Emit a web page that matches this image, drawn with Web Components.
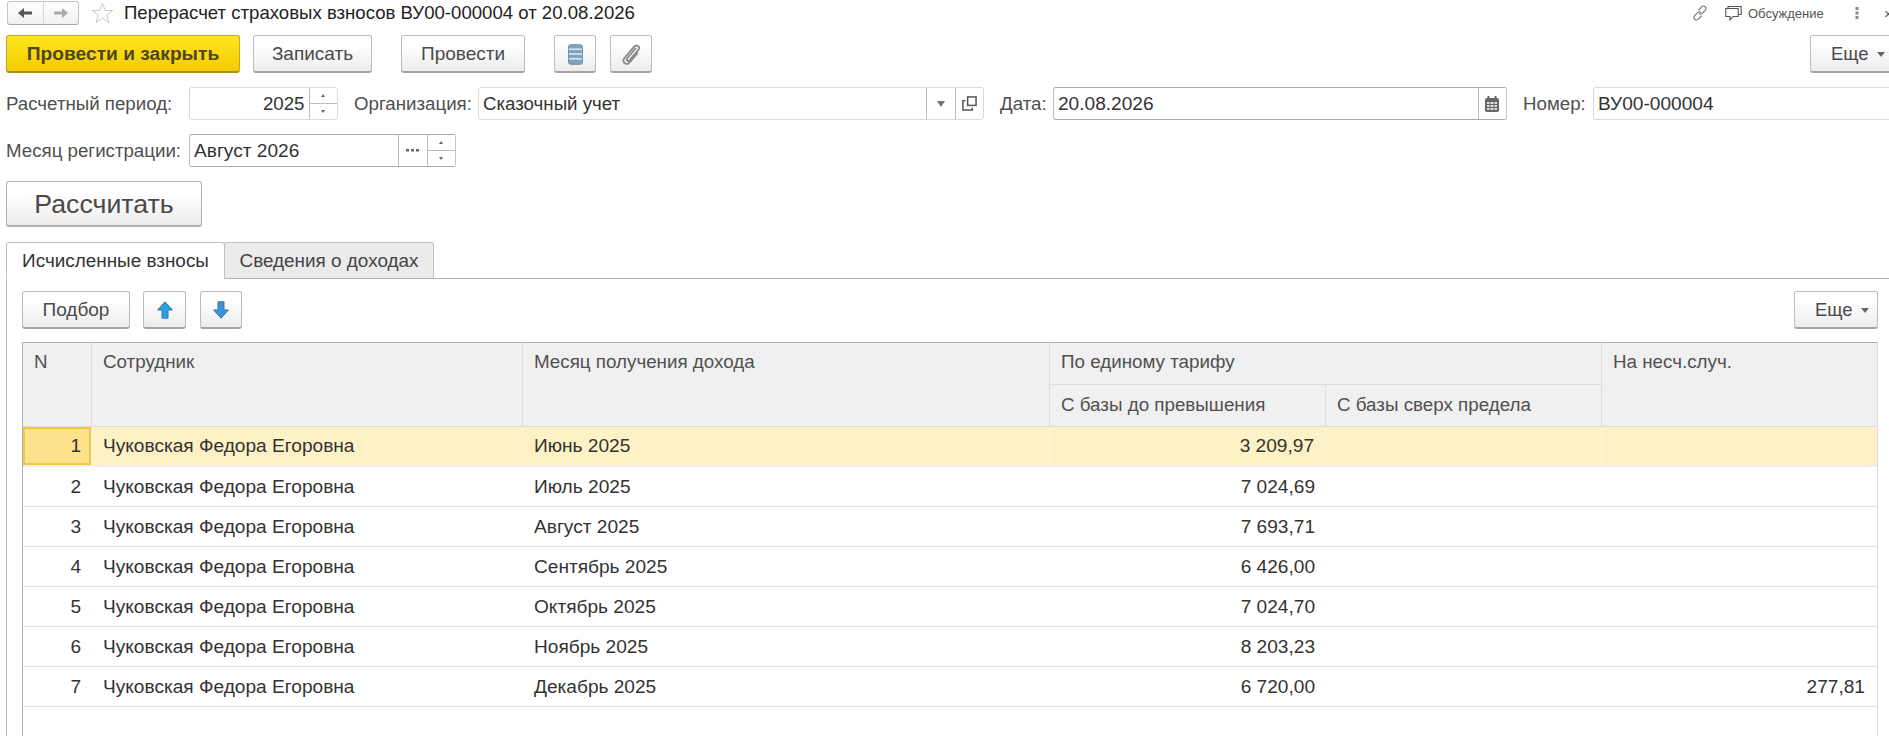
<!DOCTYPE html>
<html lang="ru"><head><meta charset="utf-8"><title>Перерасчет</title>
<style>
html,body{margin:0;height:736px;overflow:hidden;background:#fff}
body{font-family:"Liberation Sans",Arial,sans-serif;color:#333;width:1889px}
</style></head><body>
<x-page>
  <x-topbar title="Перерасчет страховых взносов ВУ00-000004 от 20.08.2026"></x-topbar>
  <x-row style="margin-top:10px;height:38px">
    <x-btn primary style="width:234px">Провести и закрыть</x-btn>
    <x-btn style="width:119px;margin-left:13px">Записать</x-btn>
    <x-btn style="width:124px;margin-left:29px">Провести</x-btn>
    <x-btn style="width:42px;margin-left:29px" aria-label="Журнал"><x-icon name="list"></x-icon></x-btn>
    <x-btn style="width:42px;margin-left:14px" aria-label="Файлы"><x-icon name="clip"></x-icon></x-btn>
    <x-btn more style="width:84px;margin-left:auto;margin-right:-5px">Еще</x-btn>
  </x-row>
  <x-row style="margin-top:14px;height:33px">
    <x-label style="width:183px">Расчетный период:</x-label>
    <x-field value="2025" right btns="spin" style="width:149px"></x-field>
    <x-label style="width:124px;margin-left:16px">Организация:</x-label>
    <x-field value="Сказочный учет" btns="drop open" style="width:506px"></x-field>
    <x-label style="width:53px;margin-left:16px">Дата:</x-label>
    <x-field value="20.08.2026" active btns="cal" style="width:454px;font-size:19.100px"></x-field>
    <x-label style="width:70px;margin-left:16px">Номер:</x-label>
    <x-field value="ВУ00-000004" style="width:400px;flex:none;font-size:19.100px"></x-field>
  </x-row>
  <x-row style="margin-top:14px;height:33px">
    <x-label style="width:183px">Месяц регистрации:</x-label>
    <x-field value="Август 2026" active btns="dots spin" style="width:267px;font-size:19.100px"></x-field>
  </x-row>
  <x-row style="margin-top:14px;height:46px">
    <x-btn large style="width:196px">Рассчитать</x-btn>
  </x-row>
  <x-tabs style="margin-top:15px" first="Исчисленные взносы" second="Сведения о доходах">
    <x-row style="height:38px;margin-bottom:13px">
      <x-btn style="width:108px">Подбор</x-btn>
      <x-btn style="width:43px;margin-left:13px" aria-label="Вверх"><x-icon name="up"></x-icon></x-btn>
      <x-btn style="width:42px;margin-left:14px" aria-label="Вниз"><x-icon name="down"></x-icon></x-btn>
      <x-btn more style="width:84px;margin-left:auto">Еще</x-btn>
    </x-row>
    <x-table>
      <x-tr n="1" month="Июнь 2025" a="3 209,97" selected></x-tr>
      <x-tr n="2" month="Июль 2025" a="7 024,69"></x-tr>
      <x-tr n="3" month="Август 2025" a="7 693,71"></x-tr>
      <x-tr n="4" month="Сентябрь 2025" a="6 426,00"></x-tr>
      <x-tr n="5" month="Октябрь 2025" a="7 024,70"></x-tr>
      <x-tr n="6" month="Ноябрь 2025" a="8 203,23"></x-tr>
      <x-tr n="7" month="Декабрь 2025" a="6 720,00" c="277,81"></x-tr>
    </x-table>
  </x-tabs>
</x-page>
<script>
const ICONS={
 list:'<svg width="15" height="21" viewBox="0 0 16 22"><rect x=".5" y=".5" width="15" height="21" rx="2.5" fill="#7fa4c2" stroke="#6b8fae"/><path d="M1 5.500h14M1 10.500h14M1 15.500h14" stroke="#dfeaf3" stroke-width="1.600"/></svg>',
 clip:'<svg width="22" height="24" viewBox="0 0 22 24"><path d="M15.500 6.500 7 16.500c-1.300 1.600 1 3.400 2.400 1.800l9-10.500c2.400-2.900-1.700-6-4.200-3.200L4.400 16c-3.300 3.900 2 8 5.200 4.300l7.600-8.900" fill="none" stroke="#8a8a8a" stroke-width="1.900" stroke-linecap="round"/></svg>',
 up:'<svg width="16" height="18" viewBox="0 0 16 18"><path d="M8 .8 15.400 9H11v8.200H5V9H.6z" fill="#2d9fe3" stroke="#2a7fb8"/></svg>',
 down:'<svg width="16" height="18" viewBox="0 0 16 18"><path d="M8 17.200.6 9H5V.8h6V9h4.400z" fill="#3f94d6" stroke="#2f74ad"/></svg>'
};
function def(name,css,html){
  customElements.define(name,class extends HTMLElement{
    connectedCallback(){
      if(this.shadowRoot)return;
      const r=this.attachShadow({mode:'open'});
      r.innerHTML='<style>'+css+'</style>'+(typeof html==='function'?html(this):html);
    }
  });
}
def('x-page',':host{display:flex;flex-direction:column;height:736px;padding-left:6px;box-sizing:border-box;width:1889px;overflow:hidden}','<slot></slot>');
def('x-row',':host{display:flex;align-items:stretch;flex:none}','<slot></slot>');
def('x-icon',':host{display:flex;align-items:center;justify-content:center}',h=>ICONS[h.getAttribute('name')]);
def('x-label',':host{display:flex;align-items:center;flex:none;font-size:18.700px;padding-top:1px;box-sizing:border-box;color:#4f4f4f;white-space:nowrap}','<slot></slot>');
def('x-topbar',`:host{display:flex;align-items:center;height:24px;margin-top:1px;flex:none}
 .nav{display:flex;width:72px;height:24px;box-sizing:border-box;margin-left:1px;border:1px solid #c4c4c4;border-bottom-color:#a8a8a8;border-radius:3px;background:linear-gradient(#fff,#f1f1f1)}
 .nav i{flex:1;display:flex;align-items:center;justify-content:center}.nav i+i{border-left:1px solid #d4d4d4}
 .star{margin-left:12px;display:block}
 h1{font:400 18.600px "Liberation Sans",Arial,sans-serif;color:#222;margin:0 0 0 10px;white-space:nowrap}
 .r{margin-left:auto;display:flex;align-items:center;color:#555;font-size:13px}
 .r svg{display:block;flex:none}.x{margin-left:25px;width:5px;font-size:15px;line-height:1;color:#555;white-space:nowrap}`,
 h=>`<div class="nav"><i><svg width="14" height="10" viewBox="0 0 14 10"><path d="M6 0 0 5l6 5V6.500h8v-3H6z" fill="#555"/></svg></i><i><svg width="14" height="10" viewBox="0 0 14 10"><path d="M8 0l6 5-6 5V6.500H0v-3h8z" fill="#aaa"/></svg></i></div>
 <svg class="star" width="23" height="23" viewBox="0 0 23 23"><path d="M11.500 1.500l2.800 7h7.400l-6 4.600 2.300 7.600-6.500-4.500-6.500 4.500 2.300-7.600-6-4.600h7.400z" fill="#fff" stroke="#c8c8c8"/></svg>
 <h1>${h.getAttribute('title')}</h1>
 <div class="r"><svg width="16" height="16" viewBox="0 0 16 16" fill="none" stroke="#777" stroke-width="1.100"><path d="M6.500 5 9.500 2a2.400 2.400 0 0 1 3.800 3.300l-3 3a2.400 2.400 0 0 1-3.300 0M9.500 11 6.500 14a2.400 2.400 0 0 1-3.800-3.300l3-3a2.400 2.400 0 0 1 3.300 0"/></svg>
 <svg style="margin-left:17px" width="17" height="17" viewBox="0 0 17 17" fill="none" stroke="#555" stroke-width="1.100"><path d="M3 3.500v-2h13.200v8h-3"/><path d="M.8 3.500h12.400v8H8l-3 3.500v-3.500H.8z"/></svg>
 <span style="margin-left:6px;width:76px;white-space:nowrap">Обсуждение</span>
 <svg style="margin-left:31px" width="4" height="14" viewBox="0 0 4 14" fill="#888"><rect x="0.500" y="1" width="3" height="3"/><rect x="0.500" y="5.500" width="3" height="3"/><rect x="0.500" y="10" width="3" height="3"/></svg>
 <span class="x">×</span></div>`);
def('x-btn',`:host{display:flex;flex:none;align-items:center;justify-content:center;box-sizing:border-box;padding-top:1px;font-size:19px;color:#4a4a4a;white-space:nowrap;border:1px solid #bdbdbd;border-bottom:2px solid #a4a4a4;border-radius:3px;background:linear-gradient(#fff 25%,#ececec)}
 :host([primary]){font-weight:700;color:#4d4720;font-size:19.200px;background:linear-gradient(#ffe61f,#f5cb00);border-color:#c2a72a;border-bottom-color:#a8901d}
 :host([large]){font-size:26.700px;border-color:#b0b0b0}
 :host([more]){justify-content:flex-start;padding-left:20px;font-size:18.400px}
 .a{width:0;height:0;border:4px solid transparent;border-top:5px solid #666;border-bottom:0;margin-left:9px}`,
 h=>'<slot></slot>'+(h.hasAttribute('more')?'<i class="a"></i>':''));
def('x-field',`:host{display:flex;flex:none;box-sizing:border-box;border:1px solid #d9d9d9;border-radius:3px;background:#fff;font-size:18.700px;color:#333;overflow:hidden}
 :host([active]){border-color:#aaa;border-left-color:#bdbdbd;border-right-color:#c4c4c4}
 .v{flex:1;min-width:0;display:flex;align-items:center;padding:1px 4px 0;white-space:nowrap}
 :host([right]) .v{justify-content:flex-end}
 .b{flex:none;width:27.500px;border-left:1px solid #bcbcbc;display:flex;flex-direction:column;align-items:center;justify-content:center;background:#fff}
 .s{flex:1;align-self:stretch;display:flex;align-items:center;justify-content:center}.s+.s{border-top:1px solid #bcbcbc}
 .u,.d{width:0;height:0;border:2.500px solid transparent}
 .u{border-top:0;border-bottom:3px solid #666}.d{border-bottom:0;border-top:3px solid #666}
 .dr{width:0;height:0;border:4.500px solid transparent;border-bottom:0;border-top:6px solid #777}`,
 h=>{const m={spin:'<div class="b"><div class="s"><i class="u"></i></div><div class="s"><i class="d"></i></div></div>',
  dots:'<div class="b"><svg width="13" height="3" viewBox="0 0 13 3" fill="#666"><rect width="3" height="2.500"/><rect x="5" width="3" height="2.500"/><rect x="10" width="3" height="2.500"/></svg></div>',
  drop:'<div class="b"><i class="dr"></i></div>',
  open:'<div class="b"><svg width="15" height="15" viewBox="0 0 16 16" fill="none" stroke="#555" stroke-width="1.600"><rect x="6" y="1" width="9" height="9"/><path d="M3.500 5H1v10h10v-2.500"/></svg></div>',
  cal:'<div class="b"><svg width="14" height="16" viewBox="0 0 14 16"><rect x="0" y="2" width="14" height="14" rx="2" fill="#666"/><rect x="2.500" y="0" width="2" height="4" fill="#666"/><rect x="9.500" y="0" width="2" height="4" fill="#666"/><path d="M2 6h10v8H2z" fill="#ddd"/><path d="M2 8.500h10M2 11.500h10M5 6v8M9 6v8" stroke="#666"/></svg></div>'};
  return '<div class="v">'+h.getAttribute('value')+'</div>'+(h.getAttribute('btns')||'').split(' ').map(k=>m[k]||'').join('');});
def('x-tabs',`:host{display:flex;flex-direction:column;flex:1;min-height:0}
 .bar{display:flex;height:37px;flex:none;position:relative;z-index:1}
 .t{display:flex;align-items:center;box-sizing:border-box;font-size:18.900px;white-space:nowrap;border:1px solid #c0c0c0;border-radius:3px 3px 0 0;justify-content:center}
 .on{width:219px;background:#fff;border-bottom:1px solid #fff;color:#333}
 .off{width:210px;margin-left:-1px;background:#ebebeb;color:#444;border-bottom-color:#b5b5b5}
 .p{flex:1;min-height:0;display:flex;flex-direction:column;margin-top:-1px;border-top:1px solid #b5b5b5;border-left:1px solid #bdbdbd;padding:12px 11px 0 15px}`,
 h=>`<div class="bar"><div class="t on">${h.getAttribute('first')}</div><div class="t off">${h.getAttribute('second')}</div></div><div class="p"><slot></slot></div>`);
const COLS='69px 431px 527px 276px 276px 1fr';
def('x-table',`:host{display:block;flex:1;min-height:0;box-sizing:border-box;border:1px solid #b0b0b0;border-bottom:0;border-right-color:#ddd;font-size:19.100px}
 .h{display:grid;grid-template-columns:${COLS};grid-template-rows:42px 41px;gap:0;background:#f0f0f0;color:#505050;border-bottom:1px solid #dcdcdc;font-size:18.800px}
 .h div{padding:8px 0 0 11px;box-sizing:border-box;border-right:1px solid #dcdcdc;white-space:nowrap}
 .h .last{border-right:0}.h .g{grid-column:4/6;border-bottom:1px solid #dcdcdc}.h .s{padding-top:9px}
 .h .t{grid-row:1/3}`,
 `<div class="h"><div class="t">N</div><div class="t">Сотрудник</div><div class="t">Месяц получения дохода</div><div class="g">По единому тарифу</div><div class="t last" style="grid-column:6;grid-row:1/3">На несч.случ.</div><div class="s" style="grid-column:4;grid-row:2">С базы до превышения</div><div class="s" style="grid-column:5;grid-row:2">С базы сверх предела</div></div><slot></slot>`);
def('x-tr',`:host{display:grid;grid-template-columns:${COLS};height:40px;box-sizing:border-box;border-bottom:1px solid #e2e2e2;color:#333}
 :host([selected]){background:#fdf1c5;border-bottom:2px solid #eee}
 div{display:flex;align-items:center;padding:0 11px;box-sizing:border-box;white-space:nowrap;min-width:0}
 .n,.r{justify-content:flex-end}.n{padding-right:11px}.r{padding-right:11px}
 :host([selected]) div{border-right:1px solid #fff6dc}
 :host([selected]) .n{background:#fde28b;box-shadow:inset 0 0 0 2px #f0c846;padding-right:10px}`,
 h=>`<div class="n">${h.getAttribute('n')}</div><div>${h.getAttribute('name')||'Чуковская Федора Егоровна'}</div><div>${h.getAttribute('month')}</div><div class="r">${h.getAttribute('a')||''}</div><div class="r"></div><div class="r" style="border:0;padding-right:12px">${h.getAttribute('c')||''}</div>`);
</script>
</body></html>
